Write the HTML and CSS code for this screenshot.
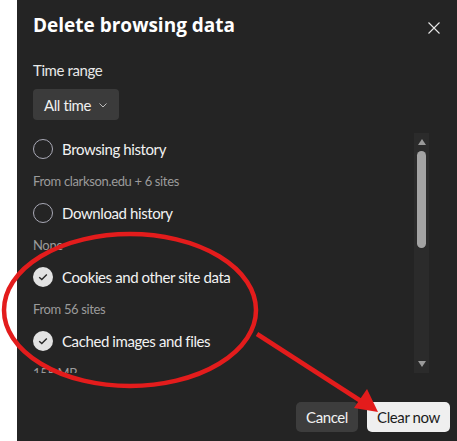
FILE: index.html
```html
<!DOCTYPE html>
<html>
<head>
<meta charset="utf-8">
<link rel="stylesheet" href="styles.css">
</head>
<body>
<div class="dialog">
  <div class="header">
    <h1 class="title">Delete browsing data</h1>
    <button class="close" aria-label="Close">
      <svg width="12" height="12" viewBox="0 0 12 12"><path d="M0.5 0.5L11.5 11.5M11.5 0.5L0.5 11.5" stroke="#e8e8e8" stroke-width="1.1" fill="none"/></svg>
    </button>
  </div>
  <div class="label">Time range</div>
  <button class="select">All time
    <svg class="chev" width="8" height="5" viewBox="0 0 8 5"><path d="M0.5 0.5L4 4L7.5 0.5" stroke="#bdbdbd" stroke-width="1" fill="none"/></svg>
  </button>
  <div class="scroller">
    <div class="list">
      <div class="item">
        <div class="row"><span class="radio"></span><span class="name">Browsing history</span></div>
        <div class="sub">From clarkson.edu + 6 sites</div>
      </div>
      <div class="item">
        <div class="row"><span class="radio"></span><span class="name">Download history</span></div>
        <div class="sub">None</div>
      </div>
      <div class="item">
        <div class="row"><span class="radio checked"><svg width="10" height="8" viewBox="0 0 10 8"><path d="M1.2 4.2L3.8 6.6L8.8 1.4" stroke="#262626" stroke-width="1.4" fill="none"/></svg></span><span class="name">Cookies and other site data</span></div>
        <div class="sub">From 56 sites</div>
      </div>
      <div class="item">
        <div class="row"><span class="radio checked"><svg width="10" height="8" viewBox="0 0 10 8"><path d="M1.2 4.2L3.8 6.6L8.8 1.4" stroke="#262626" stroke-width="1.4" fill="none"/></svg></span><span class="name">Cached images and files</span></div>
        <div class="sub">155 MB</div>
      </div>
    </div>
    <div class="scrollbar">
      <span class="arrow up"></span>
      <span class="thumb"></span>
      <span class="arrow down"></span>
    </div>
  </div>
  <div class="footer">
    <button class="btn cancel">Cancel</button>
    <button class="btn primary">Clear now</button>
  </div>
</div>
<svg class="annot" width="457" height="441" viewBox="0 0 457 441">
  <ellipse cx="130" cy="310" rx="126" ry="76" fill="none" stroke="#e31c1c" stroke-width="4.5"/>
  <line x1="257" y1="334" x2="364" y2="403" stroke="#e31c1c" stroke-width="4.5"/>
  <polygon points="378,412 354,408 367,389" fill="#e31c1c"/>
</svg>
</body>
</html>
```
FILE: styles.css
```css
html, body {
  margin: 0;
  padding: 0;
  background: #ffffff;
  overflow: hidden;
  width: 457px;
  height: 441px;
}
body {
  font-family: Lato, "Open Sans", sans-serif;
  color: #f2f2f2;
  position: relative;
}
.dialog {
  margin-left: 17px;
  width: 448px;
  height: 441px;
  background: #242424;
  box-sizing: border-box;
  padding: 0 0 0 16px;
  display: flex;
  flex-direction: column;
  align-items: flex-start;
}
.header {
  width: 100%;
  display: flex;
  justify-content: space-between;
  align-items: center;
  height: 48px;
  padding-top: 2px;
  box-sizing: border-box;
}
.title {
  margin: 0;
  font-family: "Open Sans", sans-serif;
  font-size: 19px;
  font-weight: 700;
  color: #ffffff;
  line-height: 26px;
}
.close {
  background: none;
  border: 0;
  padding: 0;
  width: 12px;
  height: 12px;
  margin-right: 25px;
  margin-top: 6px;
  display: flex;
}
.label {
  margin-top: 12px;
  font-size: 15px;
  letter-spacing: -0.4px;
  line-height: 20px;
  color: #e8e8e8;
}
.select {
  margin-top: 9px;
  height: 31px;
  width: 86px;
  border: 0;
  border-radius: 4px;
  background: #3b3b3b;
  color: #f0f0f0;
  font-family: inherit;
  font-size: 15px;
  letter-spacing: -0.4px;
  padding: 0 0 0 11px;
  display: flex;
  align-items: center;
  gap: 8px;
}
.chev { margin-top: 2px; }
.scroller {
  margin-top: 13px;
  width: 396px;
  height: 240px;
  display: flex;
  justify-content: space-between;
}
.list {
  height: 240px;
  overflow: hidden;
  flex: 1;
}
.item { height: 64px; }
.row {
  height: 32px;
  display: flex;
  align-items: center;
  gap: 9px;
}
.radio {
  width: 20px;
  height: 20px;
  box-sizing: border-box;
  border: 1.5px solid #a9a9b6;
  border-radius: 50%;
  display: flex;
  align-items: center;
  justify-content: center;
}
.radio.checked {
  border: 0;
  background: #e2e2e2;
}
.name {
  font-size: 15px;
  letter-spacing: -0.4px;
  color: #f2f2f2;
}
.sub {
  height: 32px;
  display: flex;
  align-items: center;
  font-size: 13px;
  letter-spacing: -0.35px;
  color: #9b9b9b;
}
.scrollbar {
  width: 15px;
  height: 240px;
  background: #2b2b2b;
  display: flex;
  flex-direction: column;
  align-items: center;
}
.arrow {
  width: 0;
  height: 0;
  border-left: 4.5px solid transparent;
  border-right: 4.5px solid transparent;
}
.arrow.up {
  margin-top: 6px;
  border-bottom: 6px solid #9a9a9a;
}
.arrow.down {
  margin-top: auto;
  margin-bottom: 6px;
  border-top: 6px solid #9a9a9a;
}
.thumb {
  margin-top: 6px;
  width: 9px;
  height: 97px;
  border-radius: 5px;
  background: #a3a3a3;
}
.footer {
  margin-top: 29px;
  width: 100%;
  display: flex;
  justify-content: flex-end;
  gap: 9px;
  padding-right: 15px;
  box-sizing: border-box;
}
.btn {
  height: 30px;
  border: 0;
  border-radius: 5px;
  font-family: inherit;
  font-size: 15px;
  letter-spacing: -0.4px;
  padding: 0;
}
.cancel {
  width: 62px;
  background: #3d3d3d;
  color: #f2f2f2;
}
.primary {
  width: 83px;
  background: #efefef;
  color: #1c1c1c;
}
.annot {
  position: absolute;
  left: 0;
  top: 0;
  pointer-events: none;
}
```
